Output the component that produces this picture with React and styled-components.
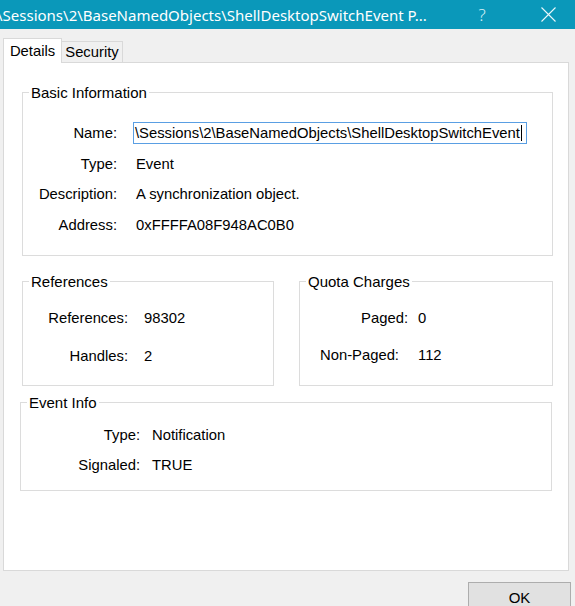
import React from 'react';
import styled, { createGlobalStyle } from 'styled-components';

const Global = createGlobalStyle`
  html, body { margin: 0; padding: 0; background: #f0f0f0; overflow: hidden; }
  body { font-family: "Liberation Sans", Arial, sans-serif; color: #000; }
`;

const Window = styled.div`
  width: 575px;
  height: 606px;
  display: flex;
  flex-direction: column;
  background: #f0f0f0;
  overflow: hidden;
  & > * { flex: none; }
`;

const TitleBar = styled.div`
  height: 29px;
  display: flex;
  align-items: center;
  padding-right: 4px;
  background: #0a98ba;
  color: #fff;
  font-family: "Noto Sans", "Open Sans", sans-serif;
  font-size: 15px;
`;

const Title = styled.div`
  flex: 1;
  min-width: 0;
  margin-left: -3px;
  white-space: nowrap;
  overflow: hidden;
`;

const TitleButton = styled.div`
  width: 46px;
  height: 100%;
  display: flex;
  align-items: center;
  justify-content: center;
  margin-right: ${p => p.$gap || 0}px;
  font-size: 17px;
  font-weight: 300;
  color: #d8f0f6;
`;

const TabStrip = styled.div`
  position: relative;
  z-index: 2;
  display: flex;
  align-items: flex-end;
  height: 25px;
  padding: 9px 0 0 3px;
`;

const Tab = styled.div`
  box-sizing: border-box;
  display: flex;
  align-items: center;
  justify-content: center;
  font-size: 14.8px;
  border: 1px solid #d9d9d9;
  border-bottom: none;
  width: ${p => (p.$active ? 59 : 62)}px;
  height: ${p => (p.$active ? 25 : 21)}px;
  margin-bottom: ${p => (p.$active ? 0 : 1)}px;
  margin-left: ${p => (p.$active ? 0 : -1)}px;
  background: ${p => (p.$active ? '#fff' : '#f0f0f0')};
  position: relative;
  z-index: ${p => (p.$active ? 1 : 0)};
`;

const Panel = styled.div`
  position: relative;
  z-index: 1;
  box-sizing: border-box;
  width: 566px;
  height: 509px;
  margin: -1px 0 0 3px;
  padding: 20px 0 0 18px;
  background: #fff;
  border: 1px solid #d9d9d9;
  display: flex;
  flex-direction: column;
`;

const Group = styled.fieldset`
  box-sizing: border-box;
  flex: none;
  margin: ${p => p.$mt || 0}px 0 0 ${p => p.$ml || 0}px;
  min-width: 0;
  width: ${p => p.$w}px;
  border: 1px solid #dcdcdc;
  padding: ${p => p.$pt}px 0 ${p => p.$pb}px 0;
`;

const Legend = styled.legend`
  margin-left: 6px;
  padding: 0 2px;
  font-size: 15px;
  line-height: 19px;
`;

const Pair = styled.div`
  display: flex;
  gap: 25px;
  margin-top: 16px;
`;

const Fields = styled.div`
  display: grid;
  grid-template-columns: ${p => p.$label}px auto;
  column-gap: ${p => p.$gap}px;
  row-gap: ${p => p.$rowGap}px;
  grid-auto-rows: 22px;
  align-items: center;
  font-size: 14.8px;
`;

const Label = styled.div`
  text-align: right;
  white-space: nowrap;
  padding-right: ${p => p.$pr || 0}px;
`;

const Value = styled.div`
  white-space: nowrap;
`;

const TextField = styled.div`
  box-sizing: border-box;
  width: 394px;
  height: 22px;
  margin-left: -3px;
  padding-left: 1px;
  border: 1px solid #5a9fe3;
  display: flex;
  align-items: center;
  white-space: nowrap;
`;

const Caret = styled.span`
  display: inline-block;
  width: 1px;
  height: 16px;
  margin-left: 1px;
  background: #000;
`;

const ButtonRow = styled.div`
  display: flex;
  justify-content: flex-end;
  padding-right: 4px;
  margin-top: 11px;
`;

const Button = styled.div`
  box-sizing: border-box;
  width: 103px;
  height: 30px;
  flex: none;
  display: flex;
  align-items: center;
  justify-content: center;
  background: #e1e1e1;
  border: 1px solid #adadad;
  font-size: 15px;
`;

export default function App() {
  return (
    <Window>
      <Global />
      <TitleBar>
        <Title>\Sessions\2\BaseNamedObjects\ShellDesktopSwitchEvent P...</Title>
        <TitleButton $gap={20}>?</TitleButton>
        <TitleButton>
          <svg width="15" height="15" viewBox="0 0 15 15">
            <path d="M0.5 0.5 L14.5 14.5 M14.5 0.5 L0.5 14.5" stroke="#eaf7fa" strokeWidth="1.1" fill="none" />
          </svg>
        </TitleButton>
      </TitleBar>

      <TabStrip>
        <Tab $active>Details</Tab>
        <Tab>Security</Tab>
      </TabStrip>

      <Panel>
        <Group $w={531} $pt={20} $pb={19.5}>
          <Legend>Basic Information</Legend>
          <Fields $label={94} $gap={19} $rowGap={8.5}>
            <Label>Name:</Label>
            <TextField>
              \Sessions\2\BaseNamedObjects\ShellDesktopSwitchEvent
              <Caret />
            </TextField>
            <Label>Type:</Label>
            <Value>Event</Value>
            <Label>Description:</Label>
            <Value>A synchronization object.</Value>
            <Label>Address:</Label>
            <Value>0xFFFFA08F948AC0B0</Value>
          </Fields>
        </Group>

        <Pair>
          <Group $w={252} $pt={16} $pb={18}>
            <Legend>References</Legend>
            <Fields $label={105} $gap={16} $rowGap={16}>
              <Label>References:</Label>
              <Value>98302</Value>
              <Label>Handles:</Label>
              <Value>2</Value>
            </Fields>
          </Group>
          <Group $w={254} $pt={16} $pb={18}>
            <Legend>Quota Charges</Legend>
            <Fields $label={108} $gap={10} $rowGap={15}>
              <Label>Paged:</Label>
              <Value>0</Value>
              <Label $pr={9}>Non-Paged:</Label>
              <Value>112</Value>
            </Fields>
          </Group>
        </Pair>

        <Group $w={532} $ml={-2} $mt={7} $pt={12} $pb={14}>
          <Legend>Event Info</Legend>
          <Fields $label={119} $gap={12} $rowGap={8}>
            <Label>Type:</Label>
            <Value>Notification</Value>
            <Label>Signaled:</Label>
            <Value>TRUE</Value>
          </Fields>
        </Group>
      </Panel>

      <ButtonRow>
        <Button>OK</Button>
      </ButtonRow>
    </Window>
  );
}
